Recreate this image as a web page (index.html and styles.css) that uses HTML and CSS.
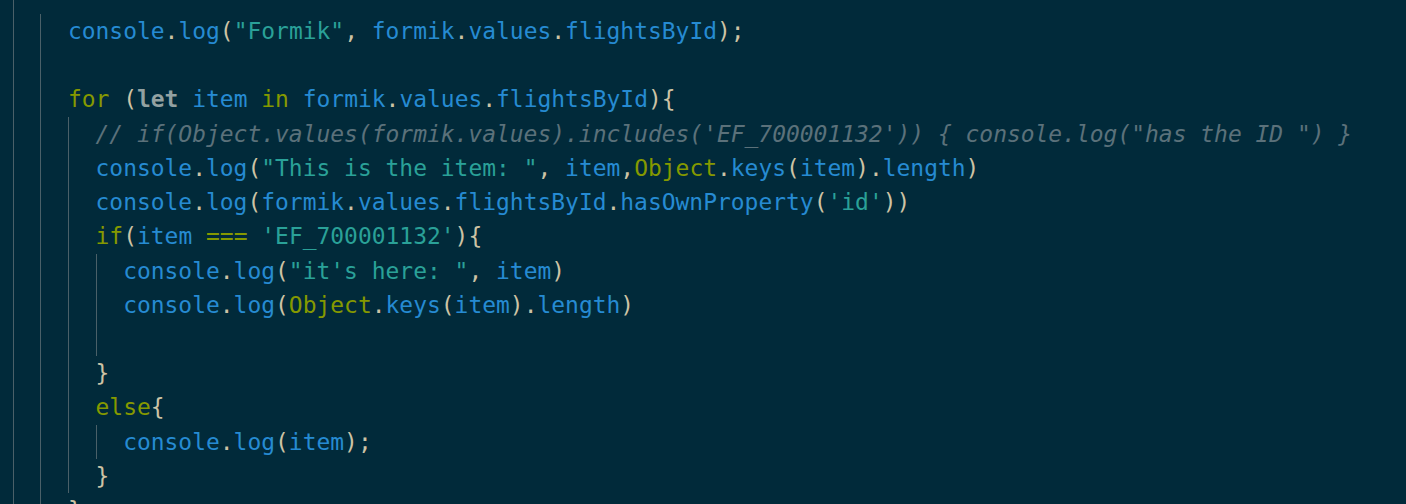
FILE: index.html
```html
<!DOCTYPE html>
<html>
<head>
<meta charset="utf-8">
<link rel="stylesheet" href="styles.css">
</head>
<body>
<div class="editor">
  <div class="guide">
    <div class="guide top">
      <div class="ln"><span class="fn">console</span><span class="p">.</span><span class="fn">log</span><span class="p">(</span><span class="str">"Formik"</span><span class="p">, </span><span class="fn">formik</span><span class="p">.</span><span class="fn">values</span><span class="p">.</span><span class="fn">flightsById</span><span class="p">);</span></div>
      <div class="ln"> </div>
      <div class="ln"><span class="kw">for</span> <span class="p">(</span><span class="let">let</span> <span class="fn">item</span> <span class="kw">in</span> <span class="fn">formik</span><span class="p">.</span><span class="fn">values</span><span class="p">.</span><span class="fn">flightsById</span><span class="p">){</span></div>
      <div class="guide">
        <div class="ln cm">// if(Object.values(formik.values).includes('EF_700001132')) { console.log("has the ID ") }</div>
        <div class="ln"><span class="fn">console</span><span class="p">.</span><span class="fn">log</span><span class="p">(</span><span class="str">"This is the item: "</span><span class="p">, </span><span class="fn">item</span><span class="p">,</span><span class="kw">Object</span><span class="p">.</span><span class="fn">keys</span><span class="p">(</span><span class="fn">item</span><span class="p">).</span><span class="fn">length</span><span class="p">)</span></div>
        <div class="ln"><span class="fn">console</span><span class="p">.</span><span class="fn">log</span><span class="p">(</span><span class="fn">formik</span><span class="p">.</span><span class="fn">values</span><span class="p">.</span><span class="fn">flightsById</span><span class="p">.</span><span class="fn">hasOwnProperty</span><span class="p">(</span><span class="str">'id'</span><span class="p">))</span></div>
        <div class="ln"><span class="kw">if</span><span class="p">(</span><span class="fn">item</span> <span class="kw">===</span> <span class="str">'EF_700001132'</span><span class="p">){</span></div>
        <div class="guide">
          <div class="ln"><span class="fn">console</span><span class="p">.</span><span class="fn">log</span><span class="p">(</span><span class="str">"it's here: "</span><span class="p">, </span><span class="fn">item</span><span class="p">)</span></div>
          <div class="ln"><span class="fn">console</span><span class="p">.</span><span class="fn">log</span><span class="p">(</span><span class="kw">Object</span><span class="p">.</span><span class="fn">keys</span><span class="p">(</span><span class="fn">item</span><span class="p">).</span><span class="fn">length</span><span class="p">)</span></div>
          <div class="ln"> </div>
        </div>
        <div class="ln"><span class="p">}</span></div>
        <div class="ln"><span class="kw">else</span><span class="p">{</span></div>
        <div class="guide">
          <div class="ln"><span class="fn">console</span><span class="p">.</span><span class="fn">log</span><span class="p">(</span><span class="fn">item</span><span class="p">);</span></div>
        </div>
        <div class="ln"><span class="p">}</span></div>
      </div>
      <div class="ln"><span class="p">}</span></div>
    </div>
  </div>
</div>
</body>
</html>
```

FILE: styles.css
```css
html, body {
  margin: 0;
  padding: 0;
  background: #012a3a;
  height: 100%;
  overflow: hidden;
}

.editor {
  box-sizing: border-box;
  height: 504px;
  padding: 14px 0 0 12.7px;
  font-family: "DejaVu Sans Mono", "Liberation Mono", monospace;
  font-size: 22.95px;
  line-height: 34.23px;
  color: #839496;
}

.guide {
  border-left: 1px solid #4a6068;
  padding-left: calc(2ch - 1px);
}

.editor > .guide {
  margin-top: -14px;
  padding-top: 14px;
  min-height: 504px;
  box-sizing: border-box;
}

.ln {
  white-space: pre;
  height: 34.23px;
}

.fn { color: #268bd2; }
.str { color: #2aa198; }
.kw { color: #859900; }
.let { color: #93a1a1; font-weight: bold; }
.p { color: #cdc3a5; }
.cm { color: #5b717a; font-style: italic; }
```
